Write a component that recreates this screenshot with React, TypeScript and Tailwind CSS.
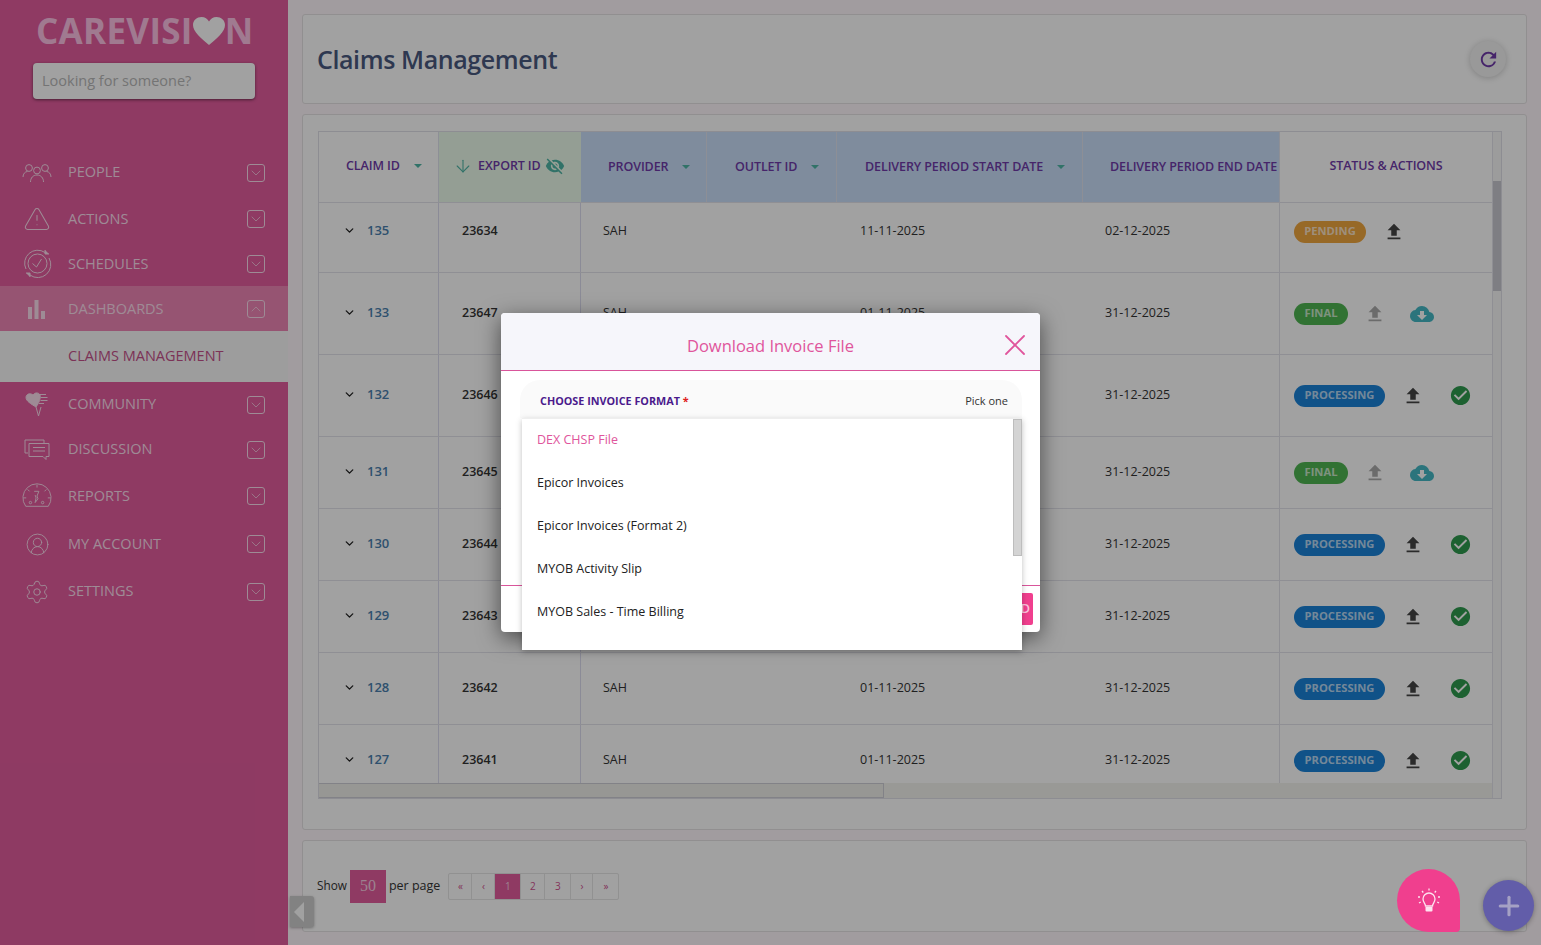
import { ArrowDown, ChevronDown, Plus, X, CircleUserRound, Settings, TriangleAlert } from 'lucide-react';
import { MdCheckCircle, MdCloudDownload, MdFileUpload, MdRefresh, MdVisibilityOff } from 'react-icons/md';
import type { ReactNode } from 'react';

const PeopleIcon = () => (
  <svg width="30" height="20" viewBox="0 0 30 20" fill="none" stroke="currentColor" strokeWidth="1">
    <circle cx="7" cy="5" r="3.4" />
    <circle cx="15" cy="7.5" r="3.4" />
    <circle cx="23" cy="5" r="3.4" />
    <path d="M1 14c0-3 2-5.500 4.500-5.500M29 14c0-3-2-5.500-4.500-5.500M8.500 19c0-4 2.500-7 6.500-7s6.500 3 6.500 7" />
  </svg>
);

const ScheduleIcon = () => (
  <svg width="29" height="29" viewBox="0 0 29 29" fill="none" stroke="currentColor" strokeWidth="1">
    <circle cx="14.500" cy="14.500" r="9.500" />
    <path d="M9.500 14.500l4 3.500 5-8" />
    <path d="M3 20A13 13 0 0 1 22 3.500M26 9a13 13 0 0 1-19 17" />
    <path d="M22 1v4h4M7 28v-4H3" fill="currentColor" />
  </svg>
);

const BarsIcon = () => (
  <svg width="22" height="22" viewBox="0 0 22 22" fill="currentColor">
    <rect x="2" y="9" width="4" height="12" />
    <rect x="8.500" y="2" width="4" height="19" />
    <rect x="15" y="13" width="4" height="8" />
  </svg>
);

const CommunityIcon = () => (
  <svg width="28" height="26" viewBox="0 0 28 26" fill="none" stroke="currentColor" strokeWidth="1">
    <path d="M13 15C8 12 3 9 3 5.500 3 2 7 0.500 10 3c2-3 6-2.500 7 0 1 3-1 8-4 12z" fill="currentColor" />
    <path d="M16 2.500h7M17.500 5.500h7M17.500 8.500h7M16 11.500h5M13 15l2.500 9L18 15" />
  </svg>
);

const DiscussionIcon = () => (
  <svg width="26" height="24" viewBox="0 0 26 24" fill="none" stroke="currentColor" strokeWidth="1">
    <path d="M4 15H1V2h19v3" />
    <path d="M5 5.500h20v13h-3v3l-3-3H5z" />
    <path d="M9 9.500h12M9 13h12" />
  </svg>
);

const GaugeIcon = () => (
  <svg width="32" height="28" viewBox="0 0 32 28" fill="none" stroke="currentColor" strokeWidth="1">
    <path d="M4 25a15 15 0 1 1 24 0z" />
    <path d="M16 2v3M6 7l2 2M26 7l-2 2M1.500 16h3M27.500 16h3M13 9h5l-2 5 1 3-3 4 1-5-1-3" />
    <circle cx="9" cy="21" r="1.300" />
    <circle cx="22" cy="21" r="1.300" />
  </svg>
);

const BulbIcon = () => (
  <svg width="24" height="26" viewBox="0 0 24 26" fill="none" stroke="currentColor" strokeWidth="1.300">
    <path d="M8.500 18c0-2.500-2.500-3.500-2.500-7a6 6 0 0 1 12 0c0 3.500-2.500 4.500-2.500 7z" />
    <path d="M8.500 19h7v3.500a1 1 0 0 1-1 1h-5a1 1 0 0 1-1-1z" fill="currentColor" stroke="none" />
    <path d="M12 0.500v2M5 3l1.300 1.500M19 3l-1.300 1.500M1 9h2M21 9h2M2 15l1.700-1M22 15l-1.700-1" />
  </svg>
);

const navItems: { label: string; height: string; icon: ReactNode; open?: boolean; lift?: string }[] = [
  { label: 'PEOPLE', height: 'h-[47px]', icon: <PeopleIcon />, lift: 'pb-[2px]' },
  { label: 'ACTIONS', height: 'h-[45px]', icon: <TriangleAlert size={28} strokeWidth={0.9} /> },
  { label: 'SCHEDULES', height: 'h-[45px]', icon: <ScheduleIcon /> },
  { label: 'DASHBOARDS', height: 'h-[45px]', icon: <BarsIcon />, open: true },
  { label: 'COMMUNITY', height: 'h-[45px]', icon: <CommunityIcon />, lift: 'pb-[2px]' },
  { label: 'DISCUSSION', height: 'h-[45px]', icon: <DiscussionIcon />, lift: 'pb-[2px]' },
  { label: 'REPORTS', height: 'h-[48px]', icon: <GaugeIcon /> },
  { label: 'MY ACCOUNT', height: 'h-[48px]', icon: <CircleUserRound size={25} strokeWidth={0.9} /> },
  { label: 'SETTINGS', height: 'h-[47px]', icon: <Settings size={26} strokeWidth={0.9} />, lift: 'pb-[2px]' },
];

const columns = ['w-[120px]', 'w-[142px]', 'w-[126px]', 'w-[130px]', 'w-[246px]', 'w-[197px]', 'w-[212px]'];

const rows = [
  { id: 135, exportId: 23634, start: '11-11-2025', end: '02-12-2025', status: 'PENDING', h: 'h-[70px]', pb: 'pb-[12px]' },
  { id: 133, exportId: 23647, start: '01-11-2025', end: '31-12-2025', status: 'FINAL', h: 'h-[82px]', pb: '' },
  { id: 132, exportId: 23646, start: '01-11-2025', end: '31-12-2025', status: 'PROCESSING', h: 'h-[82px]', pb: '' },
  { id: 131, exportId: 23645, start: '01-11-2025', end: '31-12-2025', status: 'FINAL', h: 'h-[72px]', pb: '' },
  { id: 130, exportId: 23644, start: '01-11-2025', end: '31-12-2025', status: 'PROCESSING', h: 'h-[72px]', pb: '' },
  { id: 129, exportId: 23643, start: '01-11-2025', end: '31-12-2025', status: 'PROCESSING', h: 'h-[72px]', pb: '' },
  { id: 128, exportId: 23642, start: '01-11-2025', end: '31-12-2025', status: 'PROCESSING', h: 'h-[72px]', pb: '' },
  { id: 127, exportId: 23641, start: '01-11-2025', end: '31-12-2025', status: 'PROCESSING', h: 'h-[72px]', pb: '' },
];

const pages = [
  { label: '«', w: 'w-[23px]' },
  { label: '‹', w: 'w-[23px]' },
  { label: '1', w: 'w-[26px]', active: true },
  { label: '2', w: 'w-[24px]' },
  { label: '3', w: 'w-[26px]' },
  { label: '›', w: 'w-[22px]' },
  { label: '»', w: 'w-[25px]' },
];

const options = ['DEX CHSP File', 'Epicor Invoices', 'Epicor Invoices (Format 2)', 'MYOB Activity Slip', 'MYOB Sales - Time Billing'];

function Caret() {
  return <span className="ml-[14px] h-0 w-0 border-x-[4.5px] border-t-[4.5px] border-x-transparent border-t-[#4fb5a5]" />;
}

function HeaderCell({ w, bg, label, caret, pl }: { w: string; bg: string; label: string; caret?: boolean; pl: string }) {
  return (
    <div className={`${w} ${bg} ${pl} flex h-full shrink-0 items-center border-r border-[#dfe3ee] text-[12.5px] font-semibold tracking-[-0.1px] whitespace-nowrap text-[#6f3aa8]`}>
      {label}
      {caret && <Caret />}
    </div>
  );
}

function Status({ status }: { status: string }) {
  if (status === 'PENDING') {
    return (
      <>
        <span className="flex h-[22px] w-[72px] items-center justify-center rounded-full bg-[#f0a63f] text-[11.2px] font-bold text-white/70">PENDING</span>
        <MdFileUpload size={22} className="ml-[17px] text-[#444]" />
      </>
    );
  }
  if (status === 'FINAL') {
    return (
      <>
        <span className="flex h-[22px] w-[54px] items-center justify-center rounded-full bg-[#4fb552] text-[11.2px] font-bold text-white/70">FINAL</span>
        <MdFileUpload size={22} className="ml-[16px] text-[#aaa]" />
        <MdCloudDownload size={24} className="ml-[24px] text-[#45b8c4]" />
      </>
    );
  }
  return (
    <>
      <span className="flex h-[22px] w-[91px] items-center justify-center rounded-full bg-[#1a82d8] text-[11.2px] font-bold text-white/70">PROCESSING</span>
      <MdFileUpload size={22} className="ml-[17px] text-[#444]" />
      <MdCheckCircle size={23} className="ml-[25px] text-[#2f9a4f]" />
    </>
  );
}

export default function App() {
  return (
    <div className="relative flex h-[945px] w-full overflow-hidden bg-[#fff8fc] font-['Open_Sans',sans-serif]">
      {/* sidebar */}
      <aside className="h-full w-[288px] shrink-0 bg-[#e25c9d] text-[#fbdcec]">
        <div className="flex h-[63px] items-center pb-[2px] pl-[36px] text-[35px] leading-none font-bold tracking-[0.3px] text-[#fdc2e4]">
          <span>CAREVISI</span>
          <svg width="32" height="28" viewBox="0 0 32 28" className="text-white">
            <path d="M16 28C8 21 0 15 0 8 0 3 4 0 8.500 0 12 0 14.500 2 16 4.500 17.500 2 20 0 23.500 0 28 0 32 3 32 8c0 7-8 13-16 20z" fill="currentColor" />
          </svg>
          <span>N</span>
        </div>
        <div className="pl-[33px]">
          <input
            readOnly
            placeholder="Looking for someone?"
            className="h-[36px] w-[222px] rounded-[4px] bg-white pb-[1px] pl-[9px] text-[14.500px] shadow-[0_1px_3px_rgba(0,0,0,0.5)] placeholder:text-[#b8b8b8]"
          />
        </div>
        <nav className="mt-[50px]">
          {navItems.map((item) => (
            <div key={item.label}>
              <div className={`${item.height} ${item.open ? 'bg-[#ee86b5]' : ''} flex items-center pr-[23px] pl-[22px] text-[14.500px]`}>
                <span className="flex w-[30px] items-center justify-center">{item.icon}</span>
                <span className={`${item.lift ?? ''} ml-[16px] flex-1`}>{item.label}</span>
                <span className="flex h-[18px] w-[18px] items-center justify-center rounded-[3px] border border-current">
                  <ChevronDown size={16} strokeWidth={1.1} className={item.open ? 'rotate-180' : ''} />
                </span>
              </div>
              {item.open && (
                <div className="flex h-[51px] items-center bg-[#f9f9f9] pb-[2px] pl-[68px] text-[14.500px] text-[#c5508a]">CLAIMS MANAGEMENT</div>
              )}
            </div>
          ))}
        </nav>
      </aside>

      {/* main */}
      <main className="flex flex-1 flex-col gap-[10px] px-[14px] pt-[14px]">
        <div className="flex h-[90px] items-center justify-between rounded-[3px] border border-[#e6e2e4] bg-white pr-[20px] pl-[14px]">
          <h1 className="pt-[2px] text-[25px] font-semibold tracking-[-0.4px] text-[#49597f]">Claims Management</h1>
          <button className="flex h-[36px] w-[36px] items-center justify-center rounded-full bg-[#f2f2f2] text-[#6f3aa8] shadow-[0_1px_6px_rgba(0,0,0,0.2)]">
            <MdRefresh size={23} />
          </button>
        </div>

        <div className="h-[716px] rounded-[3px] border border-[#e6e2e4] bg-white px-[15px] pt-[16px]">
          <div className="flex h-[668px] w-[1184px] border border-[#dfdfe8]">
            <div className="flex w-[1173px] flex-col">
              <div className="h-[652px] overflow-hidden">
                <div className="flex h-[71px] border-b border-[#e3e3ea]">
                  <HeaderCell w="w-[120px]" bg="" pl="pl-[27px] pb-[2px]" label="CLAIM ID" caret />
                  <div className="flex h-full w-[142px] shrink-0 items-center bg-[#ebfaeb] pb-[2px] pl-[14px] text-[12.5px] font-semibold tracking-[-0.1px] text-[#6f3aa8]">
                    <ArrowDown size={20} strokeWidth={1.3} className="mr-[5px] text-[#4fb5a5]" />
                    EXPORT ID
                    <MdVisibilityOff size={20} className="ml-[4px] text-[#4fb5a5]" />
                  </div>
                  <HeaderCell w="w-[126px]" bg="bg-[#c9def9]" pl="pl-[27px]" label="PROVIDER" caret />
                  <HeaderCell w="w-[130px]" bg="bg-[#c9def9]" pl="pl-[28px]" label="OUTLET ID" caret />
                  <HeaderCell w="w-[246px]" bg="bg-[#c9def9]" pl="pl-[28px]" label="DELIVERY PERIOD START DATE" caret />
                  <HeaderCell w="w-[197px]" bg="bg-[#c9def9]" pl="pl-[27px]" label="DELIVERY PERIOD END DATE" />
                  <div className="flex h-full w-[212px] shrink-0 items-center justify-center pb-[2px] text-[12.5px] font-semibold tracking-[-0.1px] text-[#6f3aa8]">
                    STATUS &amp; ACTIONS
                  </div>
                </div>
                {rows.map((row) => (
                  <div key={row.id} className={`${row.h} flex border-b border-[#e3e3ea] text-[12.5px] text-[#333]`}>
                    <div className={`${columns[0]} ${row.pb} flex shrink-0 items-center border-r border-[#dcdcf0] pl-[24px]`}>
                      <span className="flex items-center pb-[2px]">
                        <ChevronDown size={13} strokeWidth={2.5} className="text-[#222]" />
                        <span className="ml-[11px] text-[13px] font-semibold text-[#4b7fae]">{row.id}</span>
                      </span>
                    </div>
                    <div className={`${columns[1]} ${row.pb} flex shrink-0 items-center border-r border-[#dcdcf0] pl-[23px] font-semibold`}>{row.exportId}</div>
                    <div className={`${columns[2]} ${row.pb} flex shrink-0 items-center pl-[22px]`}>SAH</div>
                    <div className={`${columns[3]} shrink-0`} />
                    <div className={`${columns[4]} ${row.pb} flex shrink-0 items-center pl-[23px]`}>{row.start}</div>
                    <div className={`${columns[5]} ${row.pb} flex shrink-0 items-center border-r border-[#e3e3ea] pl-[22px]`}>{row.end}</div>
                    <div className={`${columns[6]} ${row.pb} flex shrink-0 items-center pl-[14px]`}>
                      <Status status={row.status} />
                    </div>
                  </div>
                ))}
              </div>
              <div className="h-[15px] bg-[#f3f3ee]">
                <div className="h-full w-[565px] border-y border-r border-[#cfcfd6] bg-[#f0f0ea]" />
              </div>
            </div>
            <div className="w-[10px] border-l border-[#e3e3ea] bg-[#f7f7f7] pt-[49px]">
              <div className="h-[110px] bg-[#c8c8d0]" />
            </div>
          </div>
        </div>

        <div className="flex h-[92px] items-center rounded-[3px] border border-[#e6e2e4] bg-white pl-[14px] text-[12.5px] text-[#333]">
          <span className="text-[11.8px]">Show</span>
          <span className="mx-[3px] flex h-[33px] w-[36px] items-center justify-center bg-[#e25c9d] font-['Liberation_Serif',serif] text-[16px] text-[#f8cfe2]">50</span>
          <span>per page</span>
          <div className="ml-[8px] flex h-[27px] rounded-[2px] border border-[#e6e6e6]">
            {pages.map((page) => (
              <span
                key={page.label}
                className={`${page.w} ${page.active ? 'bg-[#e25c9d] text-[#f8cfe2]' : 'text-[#d0518f]'} flex items-center justify-center border-r border-[#e6e6e6] text-[10px] last:border-r-0`}
              >
                {page.label}
              </span>
            ))}
          </div>
        </div>
      </main>

      {/* sidebar toggle */}
      <button className="absolute top-[896px] left-[290px] flex h-[31px] w-[24px] items-center justify-start rounded-r-[3px] bg-[#cfcfcf] pl-[4px] shadow-[0_1px_3px_rgba(0,0,0,0.3)]">
        <span className="h-0 w-0 border-y-[10px] border-r-[10px] border-y-transparent border-r-white" />
      </button>

      {/* backdrop */}
      <div className="absolute inset-0 bg-black/[0.37]" />

      <button className="absolute top-[869px] left-[1397px] flex h-[63px] w-[63px] items-center justify-center rounded-[50%_50%_4px_50%] bg-[#f03f8e] text-[#fde3ef]">
        <BulbIcon />
      </button>
      <button className="absolute top-[880px] left-[1483px] flex h-[51px] w-[51px] items-center justify-center rounded-full bg-[#625da9] text-[#a5a1c4] shadow-[0_1px_5px_rgba(0,0,0,0.3)]">
        <Plus size={30} strokeWidth={2.5} />
      </button>

      {/* modal */}
      <div className="absolute top-[313px] left-[501px] flex h-[319px] w-[539px] flex-col rounded-[4px] bg-white shadow-[0_6px_22px_rgba(0,0,0,0.55)]">
        <div className="relative flex h-[58px] items-center justify-center rounded-t-[4px] border-b border-[#d9559b] bg-[#f6f6fb] pt-[9px] text-[16.500px] text-[#e0559c]">
          Download Invoice File
          <X size={36} strokeWidth={1.2} className="absolute top-[14px] right-[7px]" />
        </div>
        <div className="flex-1" />
        <div className="flex h-[47px] items-center justify-end border-t border-[#d9559b] pr-[7px]">
          <button className="h-[32px] rounded-[2px] bg-[#f03f8e] pr-[3px] pl-[12px] text-[13px] font-semibold text-white/70">DOWNLOAD</button>
        </div>

        <div className="absolute top-[67px] left-[19px] w-[502px]">
          <div className="flex h-[38px] items-center justify-between rounded-t-[20px] bg-[#fafafa] pt-[5px] pr-[14px] pl-[20px]">
            <span className="text-[10.800px] font-bold text-[#4b1a8c]">
              CHOOSE INVOICE FORMAT <span className="text-[#e02020]">*</span>
            </span>
            <span className="text-[11px] text-[#333]">Pick one</span>
          </div>
          <div className="ml-[2px] flex h-[232px] border-t border-[#eee] bg-white shadow-[0_2px_6px_rgba(0,0,0,0.25)]">
            <ul className="flex-1 pl-[15px] text-[12.5px] text-[#222]">
              {options.map((option, i) => (
                <li key={option} className={`${i === 0 ? 'text-[#e0559c]' : ''} flex h-[43px] items-center`}>{option}</li>
              ))}
            </ul>
            <div className="h-[137px] w-[9px] border border-[#bdbdbd] bg-[#d4d4d4]" />
          </div>
        </div>
      </div>
    </div>
  );
}
